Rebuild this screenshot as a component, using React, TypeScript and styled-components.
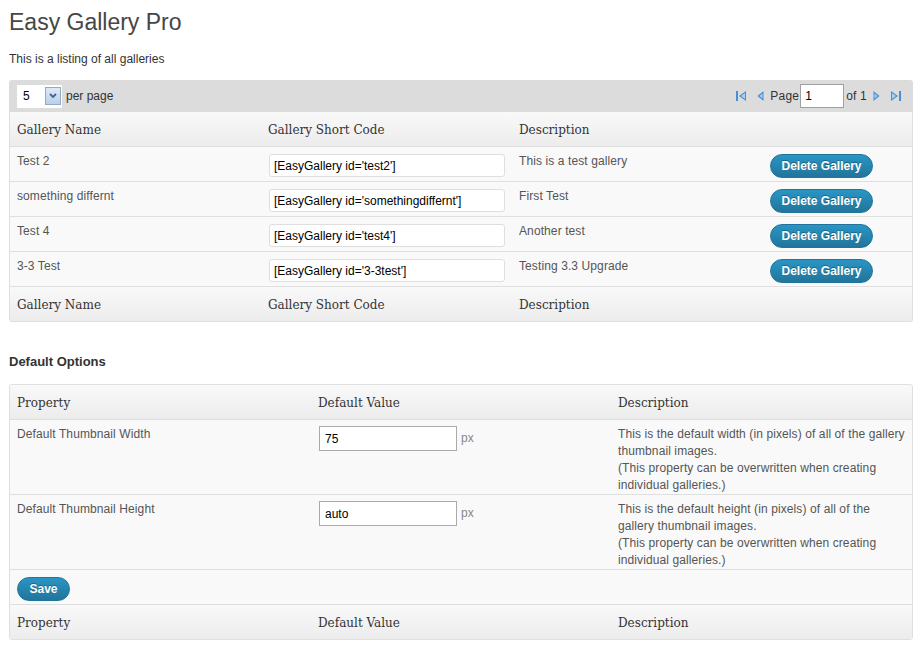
import React from "react";
import styled, { createGlobalStyle } from "styled-components";

const Global = createGlobalStyle`
  html, body { margin: 0; padding: 0; background: #fff; }
  body { font-family: "Liberation Sans", Arial, sans-serif; font-size: 12px; color: #333; }
`;

const Wrap = styled.div`
  padding: 0 10px 0 9px;
`;

const Title = styled.h2`
  margin: 0;
  padding: 8px 0 0 0;
  height: 32px;
  font-family: "Liberation Sans", Arial, sans-serif;
  font-weight: normal;
  font-size: 23px;
  line-height: 29px;
  color: #464646;
`;

const Intro = styled.p`
  margin: 12px 0 0 0;
  font-size: 12px;
  line-height: 14px;
  color: #333;
`;

const Toolbar = styled.div`
  margin-top: 14px;
  height: 32px;
  background: #dcdcdc;
  border-radius: 3px 3px 0 0;
  display: flex;
  align-items: center;
  padding: 0 11px 0 8px;
`;

const PerPage = styled.div`
  display: flex;
  align-items: center;
  gap: 4px;
  color: #333;
`;

const SelectBox = styled.div`
  width: 45px;
  height: 23px;
  background: #fff;
  display: flex;
  align-items: center;
  justify-content: space-between;
  padding: 0 1px 0 6px;
  box-sizing: border-box;
  font-size: 12px;
  color: #000;
`;

const SelectArrow = styled.div`
  width: 16px;
  height: 18px;
  border: 1px solid #94aac4;
  background: linear-gradient(#dde9f7, #b9d0ea);
  box-sizing: border-box;
  display: flex;
  align-items: center;
  justify-content: center;
`;

const Spacer = styled.div`
  flex: 1;
`;

const Pager = styled.div`
  display: flex;
  align-items: center;
  color: #333;
`;

const PagerText = styled.span<{ $ml: number }>`
  margin-left: ${(p) => p.$ml}px;
  letter-spacing: 0.2px;
`;

const PageInput = styled.div`
  width: 44px;
  height: 24px;
  background: #fff;
  border: 1px solid #a0a0a0;
  box-sizing: border-box;
  padding: 4px 4px;
  font-size: 12px;
  color: #000;
  margin-left: 1px;
`;

const IconBtn = styled.span<{ $ml: number }>`
  display: inline-flex;
  margin-left: ${(p) => p.$ml}px;
`;

const Table = styled.div<{ $cols: string; $top?: boolean }>`
  display: grid;
  grid-template-columns: ${(p) => p.$cols};
  border: 1px solid #dfdfdf;
  border-top: ${(p) => (p.$top ? "1px solid #dfdfdf" : "none")};
  border-radius: ${(p) => (p.$top ? "3px" : "0 0 3px 3px")};
  background: #f9f9f9;
  overflow: hidden;
`;

const HeadCell = styled.div<{ $foot?: boolean }>`
  height: ${(p) => (p.$foot ? 35 : 34)}px;
  box-sizing: border-box;
  padding: 11px 7px 0 7px;
  background: linear-gradient(#f9f9f9, #ececec);
  font-family: "DejaVu Serif", Georgia, serif;
  font-size: 12px;
  color: #333;
  border-top: ${(p) => (p.$foot ? "1px solid #dfdfdf" : "none")};
  white-space: nowrap;
`;

const Cell = styled.div<{ $h: number; $pr?: number }>`
  height: ${(p) => p.$h}px;
  box-sizing: border-box;
  border-top: 1px solid #dfdfdf;
  padding: 6px ${(p) => p.$pr ?? 7}px 0 7px;
  font-size: 12px;
  line-height: 17px;
  letter-spacing: 0.1px;
  color: #555;
`;

const CodeInput = styled.input`
  width: 236px;
  height: 23px;
  box-sizing: border-box;
  border: 1px solid #dfdfdf;
  border-radius: 3px;
  background: #fff;
  font-family: "Liberation Sans", Arial, sans-serif;
  font-size: 12px;
  color: #000;
  padding: 2px 4px;
  margin: 1px 0 0 1px;
`;

const ValueRow = styled.div`
  display: flex;
  align-items: center;
  gap: 4px;
  color: #888;
`;

const ValueInput = styled.input`
  width: 138px;
  height: 25px;
  box-sizing: border-box;
  border: 1px solid #aaa;
  background: #fff;
  font-family: "Liberation Sans", Arial, sans-serif;
  font-size: 12px;
  color: #000;
  padding: 2px 5px;
  margin: 0 0 0 1px;
`;

const BlueButton = styled.button<{ $w: number }>`
  width: ${(p) => p.$w}px;
  height: 24px;
  border-radius: 12px;
  border: 1px solid #21759b;
  background: linear-gradient(#2a95c5, #21759b);
  color: #fff;
  font-family: "Liberation Sans", Arial, sans-serif;
  font-weight: bold;
  font-size: 12px;
  padding: 0;
  margin-top: 1px;
  text-shadow: 0 -1px 0 rgba(0,0,0,0.3);
`;

const Section = styled.h3`
  margin: 32px 0 0 0;
  font-size: 13px;
  line-height: 16px;
  font-weight: bold;
  color: #333;
`;

const Spaced = styled.div`
  margin-top: 14px;
`;

const Desc = styled.div`
  color: #555;
  line-height: 17px;
`;

const FirstIcon = () => (
  <svg width="12" height="12" viewBox="0 0 12 12">
    <rect x="1" y="1" width="2" height="10" fill="#4b8fd0" />
    <path d="M11 1 L4 6 L11 11 Z" fill="#4b8fd0" />
    <path d="M10 3 L6 6 L10 9 Z" fill="#a9d0f2" />
  </svg>
);
const PrevIcon = () => (
  <svg width="7" height="12" viewBox="0 0 7 12">
    <path d="M6.5 1 L0.5 6 L6.5 11 Z" fill="#4b8fd0" />
    <path d="M5.5 3.5 L2.5 6 L5.5 8.5 Z" fill="#a9d0f2" />
  </svg>
);
const NextIcon = () => (
  <svg width="7" height="12" viewBox="0 0 7 12">
    <path d="M0.5 1 L6.5 6 L0.5 11 Z" fill="#4b8fd0" />
    <path d="M1.5 3.5 L4.5 6 L1.5 8.5 Z" fill="#a9d0f2" />
  </svg>
);
const LastIcon = () => (
  <svg width="12" height="12" viewBox="0 0 12 12">
    <rect x="9" y="1" width="2" height="10" fill="#4b8fd0" />
    <path d="M1 1 L8 6 L1 11 Z" fill="#4b8fd0" />
    <path d="M2 3 L6 6 L2 9 Z" fill="#a9d0f2" />
  </svg>
);

const galleries = [
  { name: "Test 2", code: "[EasyGallery id='test2']", desc: "This is a test gallery" },
  { name: "something differnt", code: "[EasyGallery id='somethingdiffernt']", desc: "First Test" },
  { name: "Test 4", code: "[EasyGallery id='test4']", desc: "Another test" },
  { name: "3-3 Test", code: "[EasyGallery id='3-3test']", desc: "Testing 3.3 Upgrade" },
];

const options = [
  {
    name: "Default Thumbnail Width",
    value: "75",
    desc: ["This is the default width (in pixels) of all of the gallery thumbnail images.", "(This property can be overwritten when creating individual galleries.)"],
  },
  {
    name: "Default Thumbnail Height",
    value: "auto",
    desc: ["This is the default height (in pixels) of all of the gallery thumbnail images.", "(This property can be overwritten when creating individual galleries.)"],
  },
];

const galleryHead = ["Gallery Name", "Gallery Short Code", "Description", ""];
const optionHead = ["Property", "Default Value", "Description"];

export default function App() {
  return (
    <>
      <Global />
      <Wrap>
        <Title>Easy Gallery Pro</Title>
        <Intro>This is a listing of all galleries</Intro>
        <Toolbar>
          <PerPage>
            <SelectBox>
              5
              <SelectArrow>
                <svg width="8" height="6" viewBox="0 0 8 6">
                  <path d="M1 1 L4 4 L7 1" stroke="#4d6185" strokeWidth="1.8" fill="none" />
                </svg>
              </SelectArrow>
            </SelectBox>
            per page
          </PerPage>
          <Spacer />
          <Pager>
            <IconBtn $ml={0}><FirstIcon /></IconBtn>
            <IconBtn $ml={10}><PrevIcon /></IconBtn>
            <PagerText $ml={6}>Page</PagerText>
            <PageInput>1</PageInput>
            <PagerText $ml={2}>of 1</PagerText>
            <IconBtn $ml={6}><NextIcon /></IconBtn>
            <IconBtn $ml={10}><LastIcon /></IconBtn>
          </Pager>
        </Toolbar>
        <Table $cols="251px 251px 251px 1fr">
          {galleryHead.map((h, i) => (
            <HeadCell key={"h" + i}>{h}</HeadCell>
          ))}
          {galleries.map((g) => (
            <React.Fragment key={g.name}>
              <Cell $h={35}>{g.name}</Cell>
              <Cell $h={35}>
                <CodeInput readOnly value={g.code} />
              </Cell>
              <Cell $h={35}>{g.desc}</Cell>
              <Cell $h={35}>
                <BlueButton $w={103}>Delete Gallery</BlueButton>
              </Cell>
            </React.Fragment>
          ))}
          {galleryHead.map((h, i) => (
            <HeadCell $foot key={"f" + i}>{h}</HeadCell>
          ))}
        </Table>
        <Section>Default Options</Section>
        <Spaced>
          <Table $top $cols="301px 300px 1fr">
            {optionHead.map((h) => (
              <HeadCell key={"h" + h}>{h}</HeadCell>
            ))}
            {options.map((o) => (
              <React.Fragment key={o.name}>
                <Cell $h={75}>{o.name}</Cell>
                <Cell $h={75}>
                  <ValueRow>
                    <ValueInput readOnly value={o.value} />
                    px
                  </ValueRow>
                </Cell>
                <Cell $h={75} $pr={4}>
                  {o.desc.map((d) => (
                    <Desc key={d}>{d}</Desc>
                  ))}
                </Cell>
              </React.Fragment>
            ))}
            <Cell $h={35} style={{ gridColumn: "1 / -1" }}>
              <BlueButton $w={53}>Save</BlueButton>
            </Cell>
            {optionHead.map((h) => (
              <HeadCell $foot key={"f" + h}>{h}</HeadCell>
            ))}
          </Table>
        </Spaced>
      </Wrap>
    </>
  );
}
